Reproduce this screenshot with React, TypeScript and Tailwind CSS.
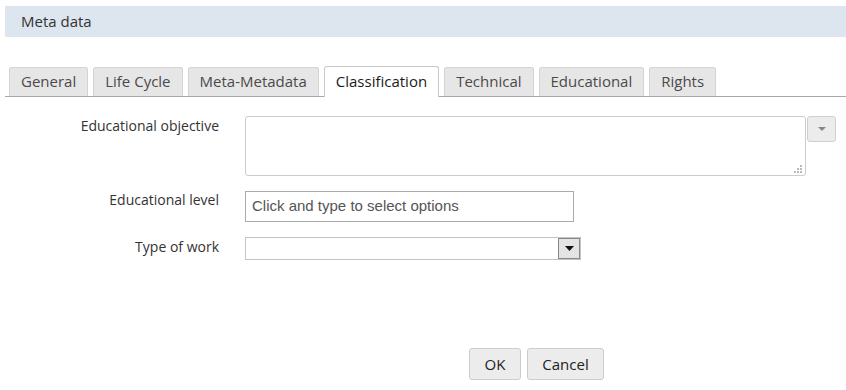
import React from "react";

const tabs = ["General", "Life Cycle", "Meta-Metadata", "Classification", "Technical", "Educational", "Rights"];

export default function App() {
  return (
    <div className="h-[390px] w-[846px] overflow-hidden bg-white font-['Open_Sans',sans-serif] text-[14px] text-[#333]">
      {/* Panel header */}
      <div className="ml-[5px] mt-[6px] flex h-[31px] items-center bg-[#dde6ef] pl-[16px] text-[15px] text-[#333]">
        Meta data
      </div>

      {/* Tabs */}
      <div className="ml-[5px] mt-[29px] flex h-[31px] items-end gap-[5px] border-b border-[#a8a8a8] pl-[4px] text-[15px]">
        {tabs.map((t) => {
          const active = t === "Classification";
          return active ? (
            <div
              key={t}
              className="-mb-px flex h-[31px] items-center rounded-t-[3px] border border-b-0 border-[#c8c8c8] bg-white px-[11px] pb-[2px] text-[#1a1a1a]"
            >
              {t}
            </div>
          ) : (
            <div
              key={t}
              className="flex h-[29px] items-center rounded-t-[3px] border border-b-0 border-[#d4d4d4] bg-[#e6e6e6] px-[11px] pb-[2px] text-[#4a4a4a]"
            >
              {t}
            </div>
          );
        })}
      </div>

      {/* Form */}
      <div className="mt-[19px] flex flex-col">
        <div className="flex items-start">
          <div className="w-[219px] -mt-[1px] text-right">Educational objective</div>
          <div className="relative ml-[26px] h-[60px] w-[561px] rounded-[3px] border border-[#ccc] bg-white">
            <svg className="absolute bottom-[1px] right-[2px]" width="9" height="9" viewBox="0 0 9 9">
              <rect x="6" y="0" width="2" height="2" fill="#bbb" />
              <rect x="3" y="3" width="2" height="2" fill="#bbb" />
              <rect x="6" y="3" width="2" height="2" fill="#bbb" />
              <rect x="0" y="6" width="2" height="2" fill="#bbb" />
              <rect x="3" y="6" width="2" height="2" fill="#bbb" />
              <rect x="6" y="6" width="2" height="2" fill="#bbb" />
            </svg>
          </div>
          <div className="ml-px flex h-[26px] w-[29px] items-center justify-center rounded-[3px] border border-[#d0d0d0] bg-[#ececec]">
            <svg width="8" height="4" viewBox="0 0 8 4">
              <path d="M0 0h8L4 4z" fill="#888" />
            </svg>
          </div>
        </div>

        <div className="mt-[15px] flex items-center">
          <div className="w-[219px] -translate-y-[7px] text-right">Educational level</div>
          <div className="ml-[26px] flex h-[31px] w-[329px] items-center border border-[#aaa] bg-white pl-[6px] font-['Liberation_Sans',sans-serif] text-[15px] text-[#555]">
            Click and type to select options
          </div>
        </div>

        <div className="mt-[15px] flex items-center">
          <div className="w-[219px] -translate-y-[2px] text-right">Type of work</div>
          <div className="ml-[26px] flex h-[23px] w-[336px] items-center justify-end border border-[#c4c4c4] bg-white">
            <div className="flex h-[21px] w-[22px] items-center justify-center border border-[#888] bg-[#e4e4e4]">
              <svg width="9" height="5" viewBox="0 0 9 5">
                <path d="M0 0h9L4.5 5z" fill="#111" />
              </svg>
            </div>
          </div>
        </div>
      </div>

      {/* Buttons */}
      <div className="mt-[88px] flex justify-center gap-[6px] pl-[227px] text-[15px]">
        <button className="h-[32px] w-[52px] rounded-[3px] border border-[#ccc] bg-[#ececec] text-[#222]">OK</button>
        <button className="h-[32px] w-[77px] rounded-[3px] border border-[#ccc] bg-[#ececec] text-[#222]">Cancel</button>
      </div>
    </div>
  );
}
